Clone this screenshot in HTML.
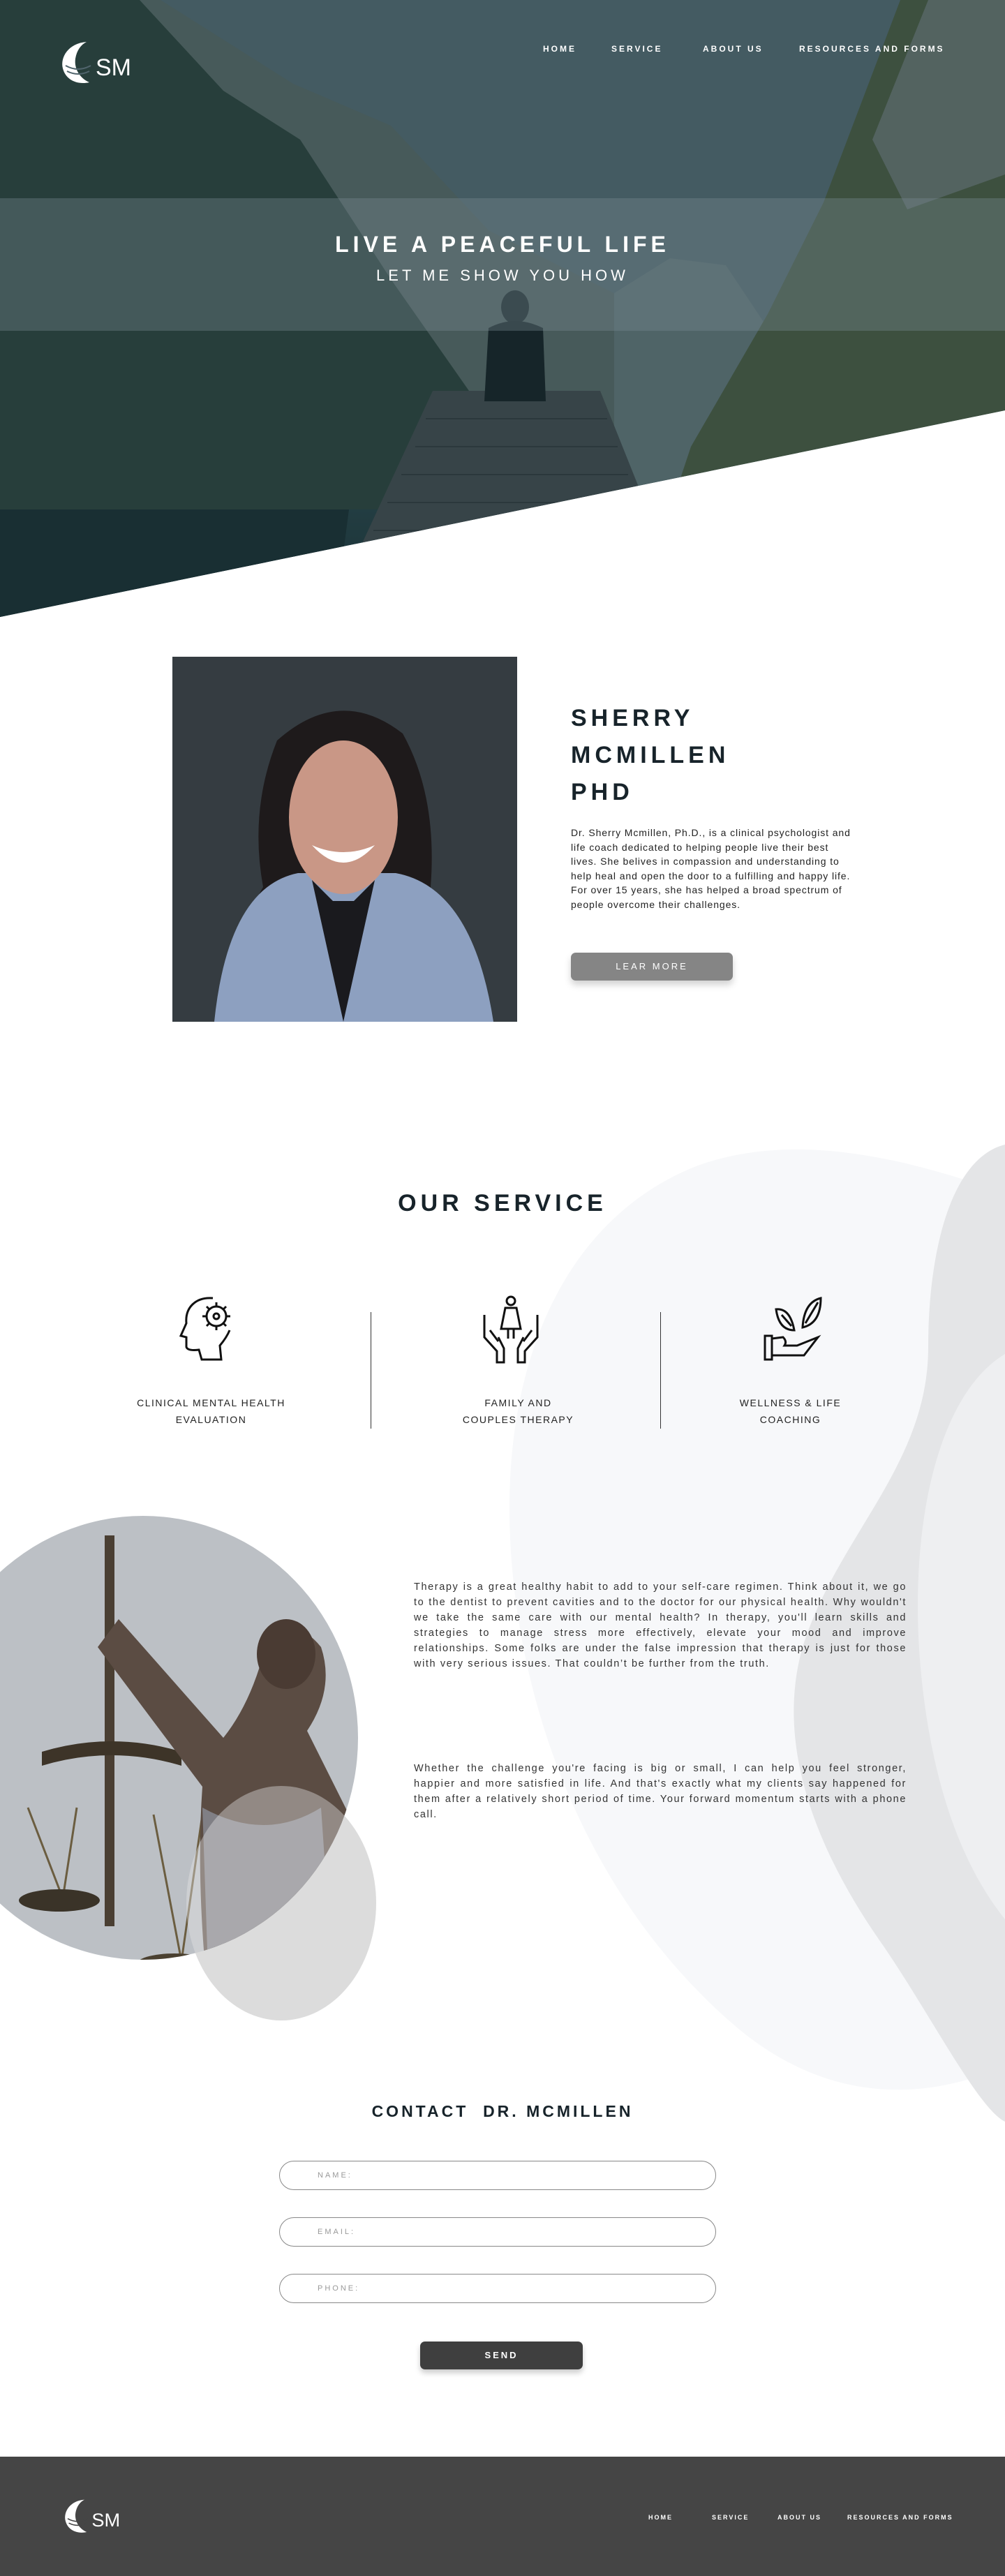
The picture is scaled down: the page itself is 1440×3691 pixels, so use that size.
<!DOCTYPE html>
<html><head><meta charset="utf-8"><style>
*{margin:0;padding:0;box-sizing:border-box}
body{width:1440px;height:3691px;position:relative;background:#fff;font-family:"Liberation Sans",sans-serif;overflow:hidden;color:#1a1f22}
.abs{position:absolute}
.nav a{position:absolute;color:#fff;font-size:12px;font-weight:bold;letter-spacing:3px;text-decoration:none}
.p{font-size:14.5px;line-height:22px;letter-spacing:1.6px;color:#333;text-align:justify}
.inp{position:absolute;left:400px;width:626px;height:42px;border:1px solid #888;border-radius:21px;font-size:11px;letter-spacing:3px;color:#999;padding:14px 0 0 54px}
.fn a{position:absolute;color:#fff;font-size:9px;font-weight:bold;letter-spacing:2px}
</style></head><body>

<svg class="abs" style="left:0;top:1600px" width="1440" height="1500" viewBox="0 0 1440 1500">
<path d="M1440 110 C1300 60 1140 20 1000 70 C820 140 730 330 730 560 C730 800 820 1100 1050 1300 C1200 1430 1350 1400 1440 1360 Z" fill="#f7f8fa"/>
<path d="M1440 40 C1360 60 1330 200 1330 330 C1330 500 1200 600 1150 760 C1110 900 1170 1050 1260 1180 C1330 1280 1400 1420 1440 1440 Z" fill="#e4e5e7"/>
<path d="M1440 340 C1340 400 1300 600 1320 800 C1340 1000 1400 1100 1440 1150 Z" fill="#eeeff1"/>
</svg>

<svg class="abs" style="left:0;top:0" width="1440" height="884" viewBox="0 0 1440 884">
<defs><clipPath id="hc"><polygon points="0,0 1440,0 1440,588 0,884"/></clipPath>
<linearGradient id="wat" x1="0" y1="0" x2="0" y2="1"><stop offset="0" stop-color="#294348"/><stop offset="1" stop-color="#1c3136"/></linearGradient></defs>
<g clip-path="url(#hc)">
<rect width="1440" height="884" fill="#566b73"/>
<polygon points="230,0 420,120 560,180 700,330 880,420 980,470 1000,730 0,730 0,0" fill="#5a6a68"/>
<polygon points="880,420 960,370 1040,380 1100,470 1100,730 880,730" fill="#64777a"/>
<polygon points="0,0 200,0 320,130 430,200 560,400 700,600 760,730 0,730" fill="#2f453f"/>
<polygon points="1440,0 1290,0 1180,290 1100,450 990,640 960,730 1440,730" fill="#4c5c45"/>
<polygon points="1440,0 1330,0 1250,200 1300,300 1440,250" fill="#6a7670"/>
<rect y="730" width="1440" height="160" fill="url(#wat)"/>
<polygon points="1000,730 1440,730 1440,640 1100,700" fill="#3d4a38"/>
<polygon points="0,730 500,730 480,884 0,884" fill="#1d3034"/>
<polygon points="620,560 860,560 940,760 470,884" fill="#444d50"/>
<g stroke="#343d40" stroke-width="2">
<line x1="610" y1="600" x2="870" y2="600"/><line x1="595" y1="640" x2="885" y2="640"/><line x1="575" y1="680" x2="900" y2="680"/><line x1="555" y1="720" x2="915" y2="720"/><line x1="535" y1="760" x2="930" y2="760"/><line x1="515" y1="800" x2="940" y2="800"/></g>
<ellipse cx="738" cy="440" rx="20" ry="24" fill="#1c272b"/>
<path d="M700 470 Q738 450 778 470 L782 575 L694 575 Z" fill="#192327"/>
<rect width="1440" height="884" fill="#0f2a30" opacity=".25"/>
<rect y="284" width="1440" height="190" fill="#7a8d94" opacity=".35"/>
</g>
</svg>

<svg class="abs" style="left:84px;top:58px" width="110" height="70" viewBox="0 0 110 70">
<path d="M40 2 C14 4 2 24 6 40 C10 56 26 64 44 60 C30 54 22 40 24 26 C26 14 32 6 40 2 Z" fill="#fff"/>
<path d="M12 44 Q28 52 44 44 M10 36 Q28 46 46 36" stroke="#50646c" stroke-width="2" fill="none"/>
<text x="53" y="50" fill="#fff" font-family="Liberation Sans" font-size="34">SM</text>
</svg>
<div class="nav"><a style="left:778px;top:63px">HOME</a><a style="left:876px;top:63px">SERVICE</a><a style="left:1007px;top:63px">ABOUT US</a><a style="left:1145px;top:63px">RESOURCES AND FORMS</a></div>
<div class="abs" style="left:0;width:1440px;top:332px;text-align:center;color:#fff;font-size:32px;font-weight:bold;letter-spacing:6px">LIVE A PEACEFUL LIFE</div>
<div class="abs" style="left:0;width:1440px;top:382px;text-align:center;color:#fff;font-size:22px;letter-spacing:5px">LET ME SHOW YOU HOW</div>

<svg class="abs" style="left:247px;top:941px" width="494" height="523" viewBox="0 0 494 523">
<rect width="494" height="523" fill="#353c41"/>
<path d="M150 120 Q240 40 330 110 Q380 200 370 330 Q400 420 410 523 L70 523 Q90 400 130 330 Q110 220 150 120 Z" fill="#1e1a1b"/>
<path d="M60 523 Q80 330 180 310 L320 310 Q430 330 460 523 Z" fill="#8da0c0"/>
<ellipse cx="245" cy="230" rx="78" ry="110" fill="#c99786"/>
<path d="M200 270 Q245 320 290 270 Q245 290 200 270 Z" fill="#fff"/>
<path d="M200 320 L245 523 L290 320 L260 350 L230 350 Z" fill="#1a1a1e"/>
</svg>
<div class="abs" style="left:818px;top:1003px;font-size:34px;font-weight:bold;letter-spacing:6px;line-height:53px;color:#17232a">SHERRY<br>MCMILLEN<br>PHD</div>
<div class="abs" style="left:818px;top:1183px;width:408px;font-size:14px;line-height:20.5px;letter-spacing:.9px;color:#222">Dr. Sherry Mcmillen, Ph.D., is a clinical psychologist and life coach dedicated to helping people live their best lives. She belives in compassion and understanding to help heal and open the door to a fulfilling and happy life.&nbsp; For over 15 years, she has helped a broad spectrum of people overcome their challenges.</div>
<div class="abs" style="left:818px;top:1365px;width:232px;height:40px;background:#858585;border-radius:7px;color:#fff;font-size:13px;letter-spacing:3px;text-align:center;line-height:40px;box-shadow:0 6px 10px rgba(0,0,0,.18)">LEAR MORE</div>

<div class="abs" style="left:0;width:1440px;top:1705px;text-align:center;font-size:34px;font-weight:bold;letter-spacing:6px;color:#17232a">OUR SERVICE</div>
<svg class="abs" style="left:255px;top:1856px" width="95" height="96" viewBox="0 0 95 96" fill="none" stroke="#111" stroke-width="3">
<path d="M50 4 C25 2 10 18 12 40 L4 58 L12 60 L12 74 Q14 80 30 78 L34 92 L62 92 L60 72 Q70 60 74 50"/>
<circle cx="55" cy="30" r="14"/><circle cx="55" cy="30" r="4"/>
<path d="M55 10 V16 M55 44 V50 M35 30 H41 M69 30 H75 M41 16 L45 20 M65 40 L69 44 M69 16 L65 20 M41 44 L45 40"/>
</svg>
<svg class="abs" style="left:686px;top:1856px" width="92" height="98" viewBox="0 0 92 98" fill="none" stroke="#111" stroke-width="3">
<circle cx="46" cy="8" r="6"/><path d="M38 18 H54 L60 48 H32 Z M42 48 V62 M50 48 V62"/>
<path d="M8 28 V60 L26 80 V96 H36 V76 L28 60 M16 50 L28 66"/>
<path d="M84 28 V60 L66 80 V96 H56 V76 L64 60 M76 50 L64 66"/>
</svg>
<svg class="abs" style="left:1092px;top:1856px" width="96" height="94" viewBox="0 0 96 94" fill="none" stroke="#111" stroke-width="3">
<path d="M20 20 Q40 18 46 50 Q24 50 20 20 Z M84 4 Q60 10 58 46 Q84 40 84 4 Z M28 28 L42 44 M80 10 L62 40"/>
<path d="M4 58 H14 V92 H4 Z M14 62 L30 60 Q36 66 32 72 H50 L80 60 L60 86 H14"/>
</svg>
<div class="abs" style="left:531px;top:1880px;width:1px;height:167px;background:#333"></div>
<div class="abs" style="left:946px;top:1880px;width:1px;height:167px;background:#333"></div>
<div class="abs" style="left:150px;width:305px;top:1998px;text-align:center;font-size:14px;line-height:24px;letter-spacing:1.5px;color:#222">CLINICAL MENTAL HEALTH<br>EVALUATION</div>
<div class="abs" style="left:590px;width:305px;top:1998px;text-align:center;font-size:14px;line-height:24px;letter-spacing:1.5px;color:#222">FAMILY AND<br>COUPLES THERAPY</div>
<div class="abs" style="left:980px;width:305px;top:1998px;text-align:center;font-size:14px;line-height:24px;letter-spacing:1.5px;color:#222">WELLNESS &amp; LIFE<br>COACHING</div>

<svg class="abs" style="left:0;top:2160px" width="560" height="750" viewBox="0 0 560 750">
<defs><clipPath id="ov"><ellipse cx="205" cy="330" rx="308" ry="318"/></clipPath></defs>
<ellipse cx="403" cy="567" rx="136" ry="168" fill="#dcdcdc"/>
<g clip-path="url(#ov)">
<rect width="560" height="700" fill="#bcc0c5"/>
<rect x="150" y="40" width="14" height="560" fill="#4a3f33"/>
<path d="M60 350 Q160 320 260 350 L260 370 Q160 340 60 370 Z" fill="#3d3428"/>
<path d="M40 430 L90 560 M110 430 L90 560 M220 440 L260 650 M290 440 L260 650" stroke="#6b5d40" stroke-width="3"/>
<ellipse cx="85" cy="563" rx="58" ry="16" fill="#3a3328"/>
<ellipse cx="250" cy="655" rx="55" ry="16" fill="#4a4030"/>
<path d="M140 200 L170 160 L320 330 Q360 280 380 200 Q420 150 460 200 Q480 260 440 320 L500 440 Q510 560 470 720 L300 720 Q280 540 290 400 Z" fill="#5b4c43"/>
<path d="M290 430 Q380 480 460 430 L480 720 L300 720 Z" fill="#8a8c96" opacity=".8"/>
<ellipse cx="410" cy="210" rx="42" ry="50" fill="#4a3b33"/>
<ellipse cx="403" cy="567" rx="136" ry="168" fill="#e6e6e6" opacity=".4"/>
</g>
</svg>
<div class="abs p" style="left:593px;top:2263px;width:706px">Therapy is a great healthy habit to add to your self-care regimen. Think about it, we go to the dentist to prevent cavities and to the doctor for our physical health. Why wouldn't we take the same care with our mental health? In therapy, you'll learn skills and strategies to manage stress more effectively, elevate your mood and improve relationships. Some folks are under the false impression that therapy is just for those with very serious issues. That couldn’t be further from the truth.</div>
<div class="abs p" style="left:593px;top:2523px;width:706px">Whether the challenge you're facing is big or small, I can help you feel stronger, happier and more satisfied in life. And that's exactly what my clients say happened for them after a relatively short period of time. Your forward momentum starts with a phone call.</div>

<div class="abs" style="left:0;width:1440px;top:3012px;text-align:center;font-size:23px;font-weight:bold;letter-spacing:4px;color:#17232a">CONTACT&nbsp; DR. MCMILLEN</div>
<div class="inp" style="top:3096px">NAME:</div>
<div class="inp" style="top:3177px">EMAIL:</div>
<div class="inp" style="top:3258px">PHONE:</div>
<div class="abs" style="left:602px;top:3355px;width:233px;height:40px;background:#3f3f3f;border-radius:7px;color:#fff;font-size:13px;font-weight:bold;letter-spacing:3px;text-align:center;line-height:40px;box-shadow:0 5px 8px rgba(0,0,0,.2)">SEND</div>

<div class="abs" style="left:0;top:3520px;width:1440px;height:171px;background:#454545"></div>
<svg class="abs" style="left:88px;top:3580px" width="90" height="56" viewBox="0 0 110 70">
<path d="M40 2 C14 4 2 24 6 40 C10 56 26 64 44 60 C30 54 22 40 24 26 C26 14 32 6 40 2 Z" fill="#fff"/>
<path d="M12 44 Q28 52 44 44 M10 36 Q28 46 46 36" stroke="#454545" stroke-width="2" fill="none"/>
<text x="53" y="50" fill="#fff" font-family="Liberation Sans" font-size="34">SM</text>
</svg>
<div class="fn"><a style="left:929px;top:3602px">HOME</a><a style="left:1020px;top:3602px">SERVICE</a><a style="left:1114px;top:3602px">ABOUT US</a><a style="left:1214px;top:3602px">RESOURCES AND FORMS</a></div>
</body></html>
